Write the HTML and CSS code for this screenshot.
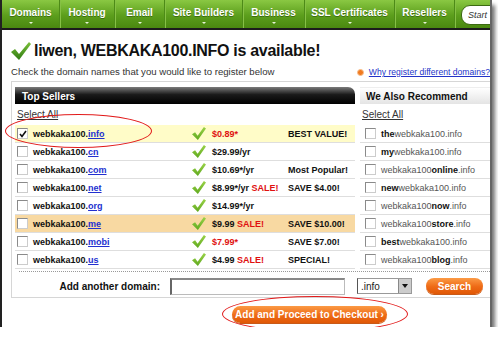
FILE: index.html
```html
<!DOCTYPE html>
<html lang="en">
<head>
    <meta charset="UTF-8">
    <title>Domain Search Results</title>
    <link rel="stylesheet" href="styles.css">
</head>
<body>

<div class="shot">
    <nav class="topnav">
        <a class="nav-item w-domains">Domains</a>
        <a class="nav-item w-hosting">Hosting</a>
        <a class="nav-item w-email">Email</a>
        <a class="nav-item w-builders">Site Builders</a>
        <a class="nav-item w-business">Business</a>
        <a class="nav-item w-ssl">SSL Certificates</a>
        <a class="nav-item w-resellers">Resellers</a>
        <div class="nav-search">Start</div>
    </nav>

    <div class="page">
        <h1 class="avail">
            <svg class="big-check" width="22" height="20" viewBox="0 0 22 20">
                <defs>
                    <linearGradient id="gk" x1="0" y1="0" x2="0" y2="1">
                        <stop offset="0" stop-color="#7bc13a"/>
                        <stop offset="1" stop-color="#2f7a12"/>
                    </linearGradient>
                </defs>
                <path d="M1 11 L5 8 L9 13 L19 1 L21 3 L9 19 Z" fill="url(#gk)"/>
            </svg>
            <span>liwen, WEBKAKA100.INFO is available!</span>
        </h1>

        <div class="intro">
            <span>Check the domain names that you would like to register below</span>
            <a class="why"><i class="bullet"></i>Why register different domains?</a>
        </div>

        <div class="results">
            <div class="panels">
                <div class="sellers">
                    <div class="sellers-head">Top Sellers</div>
                    <div class="select-all">Select All</div>
                    <ul class="rows">
                        <li class="row hl-yellow">
                            <span class="box checked"><svg width="8" height="8" viewBox="0 0 8 8"><path d="M1 4 L3 6.5 L7 1" fill="none" stroke="#111" stroke-width="1.6"/></svg></span>
                            <span class="dom">webkaka100.<a>info</a></span>
                            <span class="tick"></span>
                            <span class="price red">$0.89*</span>
                            <span class="promo">BEST VALUE!</span>
                        </li>
                        <li class="row">
                            <span class="box"></span>
                            <span class="dom">webkaka100.<a>cn</a></span>
                            <span class="tick"></span>
                            <span class="price">$29.99/yr</span>
                            <span class="promo"></span>
                        </li>
                        <li class="row">
                            <span class="box"></span>
                            <span class="dom">webkaka100.<a>com</a></span>
                            <span class="tick"></span>
                            <span class="price">$10.69*/yr</span>
                            <span class="promo">Most Popular!</span>
                        </li>
                        <li class="row">
                            <span class="box"></span>
                            <span class="dom">webkaka100.<a>net</a></span>
                            <span class="tick"></span>
                            <span class="price">$8.99*/yr <em>SALE!</em></span>
                            <span class="promo">SAVE $4.00!</span>
                        </li>
                        <li class="row">
                            <span class="box"></span>
                            <span class="dom">webkaka100.<a>org</a></span>
                            <span class="tick"></span>
                            <span class="price">$14.99*/yr</span>
                            <span class="promo"></span>
                        </li>
                        <li class="row hl-peach">
                            <span class="box"></span>
                            <span class="dom">webkaka100.<a>me</a></span>
                            <span class="tick"></span>
                            <span class="price">$9.99 <em>SALE!</em></span>
                            <span class="promo">SAVE $10.00!</span>
                        </li>
                        <li class="row">
                            <span class="box"></span>
                            <span class="dom">webkaka100.<a>mobi</a></span>
                            <span class="tick"></span>
                            <span class="price red">$7.99*</span>
                            <span class="promo">SAVE $7.00!</span>
                        </li>
                        <li class="row">
                            <span class="box"></span>
                            <span class="dom">webkaka100.<a>us</a></span>
                            <span class="tick"></span>
                            <span class="price">$4.99 <em>SALE!</em></span>
                            <span class="promo">SPECIAL!</span>
                        </li>
                    </ul>
                </div>

                <div class="recommend">
                    <div class="rec-head">We Also Recommend</div>
                    <div class="select-all">Select All</div>
                    <ul class="rec-rows">
                        <li><span class="box"></span><span><b>the</b>webkaka100.info</span></li>
                        <li><span class="box"></span><span><b>my</b>webkaka100.info</span></li>
                        <li><span class="box"></span><span>webkaka100<b>online</b>.info</span></li>
                        <li><span class="box"></span><span><b>new</b>webkaka100.info</span></li>
                        <li><span class="box"></span><span>webkaka100<b>now</b>.info</span></li>
                        <li><span class="box"></span><span>webkaka100<b>store</b>.info</span></li>
                        <li><span class="box"></span><span><b>best</b>webkaka100.info</span></li>
                        <li><span class="box"></span><span>webkaka100<b>blog</b>.info</span></li>
                    </ul>
                </div>
            </div>

            <div class="add-domain">
                <label for="another">Add another domain:</label>
                <input type="text" id="another">
                <div class="tld-select"><span>.info</span><i></i></div>
                <button class="btn-orange search-btn">Search</button>
            </div>
        </div>

        <div class="checkout">
            <button class="btn-orange checkout-btn">Add and Proceed to Checkout &rsaquo;</button>
        </div>
    </div>

    <div class="ring ring-first"></div>
    <div class="ring ring-checkout"></div>
</div>

</body>
</html>
```

FILE: styles.css
```css
body {
    margin: 0;
    background-color: #fff;
    font-family: "Liberation Sans", Arial, sans-serif;
}

.shot {
    position: relative;
    width: 488px;
    height: 327px;
    border-left: 2px solid #222;
    border-right: 2px solid #666;
    box-shadow: 3px 5px 4px rgba(0, 0, 0, 0.55);
    overflow: hidden;
    background-color: #fff;
}

/* top navigation */
.topnav {
    display: flex;
    height: 28px;
    border-bottom: 2px solid #1c1c1c;
    background: linear-gradient(#8ac843, #5c9e1c 55%, #4a8810);
}

.nav-item {
    position: relative;
    flex-shrink: 0;
    color: #fff;
    font-size: 10px;
    font-weight: bold;
    text-align: center;
    line-height: 26px;
    border-right: 1px solid #4d8a17;
    box-shadow: 1px 0 0 #86c045;
    text-shadow: 0 1px 0 #3d6e10;
}

.nav-item::after {
    content: "";
    position: absolute;
    left: 50%;
    bottom: 4px;
    margin-left: -2px;
    border-left: 2px solid transparent;
    border-right: 2px solid transparent;
    border-top: 2px solid #e8f4d8;
}

.w-domains { width: 57px; }
.w-hosting { width: 54px; }
.w-email { width: 49px; }
.w-builders { width: 77px; }
.w-business { width: 61px; }
.w-ssl { width: 89px; }
.w-resellers { width: 59px; }

.nav-search {
    flex-shrink: 0;
    margin: 5px 0 0 6px;
    width: 60px;
    height: 18px;
    border-radius: 9px;
    background-color: #fff;
    border: 1px solid #3c6a12;
    font-size: 9px;
    font-style: italic;
    line-height: 18px;
    padding-left: 6px;
    color: #333;
}

/* page body */
.page {
    padding-left: 8px;
}

.avail {
    display: flex;
    align-items: center;
    margin: 10px 0 0;
    font-size: 16px;
    letter-spacing: -0.3px;
    line-height: 22px;
    color: #111;
}

.big-check {
    margin-right: 2px;
}

.intro {
    display: flex;
    align-items: center;
    margin-top: 4px;
    font-size: 9.6px;
    line-height: 12px;
    color: #333;
    padding-left: 1px;
    white-space: nowrap;
}

.why {
    display: flex;
    align-items: center;
    margin-left: auto;
    color: #2333c8;
    text-decoration: underline;
    font-size: 8.6px;
}

.bullet {
    width: 5px;
    height: 5px;
    border-radius: 50%;
    background-color: #f07a20;
    border: 1px solid #f9c08e;
    margin-right: 5px;
}

/* results box */
.results {
    margin-top: 3px;
    margin-left: 1px;
    width: 500px;
    height: 217px;
    border: 1px solid #d6d6d6;
    padding: 5px 0 0 3px;
    box-sizing: border-box;
}

.panels {
    display: flex;
    gap: 5px;
}

.sellers {
    width: 340px;
}

.sellers-head {
    height: 17px;
    line-height: 19px;
    padding-left: 7px;
    border-radius: 0 7px 0 0;
    background: linear-gradient(#7a7a7a, #1a1a1a 45%, #000);
    color: #fff;
    font-size: 10px;
    font-weight: bold;
}

.select-all {
    height: 21px;
    line-height: 22px;
    padding-left: 2px;
    font-size: 10px;
    color: #333;
    text-decoration: underline;
}

.rows,
.rec-rows {
    list-style: none;
    margin: 0;
    padding: 0;
}

.row {
    display: grid;
    grid-template-columns: 16px 159px 20px 76px 1fr;
    align-items: center;
    height: 17px;
    padding-left: 2px;
    border-bottom: 1px solid #dedede;
    font-size: 9px;
    font-weight: bold;
    color: #111;
}

.hl-yellow {
    background-color: #fffcc8;
}

.hl-peach {
    background-color: #f8d9a2;
}

.box {
    display: inline-flex;
    align-items: center;
    justify-content: center;
    width: 9px;
    height: 9px;
    border: 1px solid #8a8a8a;
    border-right-color: #ccc;
    border-bottom-color: #ccc;
    background-color: #fff;
}

.dom a {
    color: #2230d0;
    text-decoration: underline;
}

.tick {
    width: 14px;
    height: 13px;
    background: linear-gradient(#9bd34a, #5fa91e);
    clip-path: polygon(0 55%, 22% 40%, 40% 68%, 85% 0, 100% 12%, 42% 100%);
}

.red,
.price em {
    color: #e01010;
    font-style: normal;
}

/* recommend column */
.recommend {
    width: 140px;
}

.rec-head {
    height: 17px;
    line-height: 18px;
    padding-left: 6px;
    background: linear-gradient(#fff, #e4e4e4);
    border-top: 1px solid #eee;
    box-sizing: border-box;
    font-size: 10px;
    font-weight: bold;
    color: #111;
}

.recommend .select-all {
    padding-left: 2px;
}

.rec-rows li {
    display: flex;
    align-items: center;
    gap: 5px;
    height: 17px;
    padding-left: 5px;
    border-bottom: 1px solid #dedede;
    font-size: 9px;
    color: #555;
}

.rec-rows b {
    color: #111;
}

/* add another domain */
.add-domain {
    display: flex;
    align-items: center;
    margin-top: 2px;
    margin-left: 4px;
    padding-top: 4px;
    height: 20px;
    border-top: 1px dotted #999;
}

.add-domain label {
    width: 141px;
    text-align: right;
    font-size: 10px;
    font-weight: bold;
    color: #111;
}

.add-domain input {
    margin-left: 10px;
    width: 175px;
    height: 17px;
    box-sizing: border-box;
    border: 1px solid #bbb;
    border-left: 2px solid #666;
    border-top: 2px solid #888;
    padding: 0;
}

.tld-select {
    display: flex;
    justify-content: space-between;
    margin-left: 12px;
    width: 55px;
    height: 16px;
    box-sizing: border-box;
    border: 1px solid #999;
    border-left-color: #555;
    font-size: 10px;
    line-height: 15px;
    padding-left: 3px;
    color: #222;
}

.tld-select i {
    width: 12px;
    background-color: #ccc;
    border-left: 1px solid #888;
    position: relative;
}

.tld-select i::after {
    content: "";
    position: absolute;
    left: 3px;
    top: 5px;
    border-left: 3px solid transparent;
    border-right: 3px solid transparent;
    border-top: 4px solid #111;
}

.btn-orange {
    border: none;
    border-radius: 9px;
    background: linear-gradient(#fb9a45, #ee6a15 55%, #e05806);
    color: #fff;
    font-family: "Liberation Sans", Arial, sans-serif;
    font-weight: bold;
    font-size: 10px;
    padding: 0;
    box-shadow: 0 1px 0 #c85a18;
}

.search-btn {
    margin-left: 14px;
    width: 57px;
    height: 16px;
}

.checkout {
    padding: 6px 0 0 222px;
}

.checkout-btn {
    width: 155px;
    height: 17px;
}

/* red hand-drawn rings */
.ring {
    position: absolute;
    border: 1px solid #e21b1b;
    border-radius: 50%;
}

.ring-first {
    left: 3px;
    top: 114px;
    width: 145px;
    height: 32px;
}

.ring-checkout {
    left: 220px;
    top: 296px;
    width: 184px;
    height: 34px;
}
```
